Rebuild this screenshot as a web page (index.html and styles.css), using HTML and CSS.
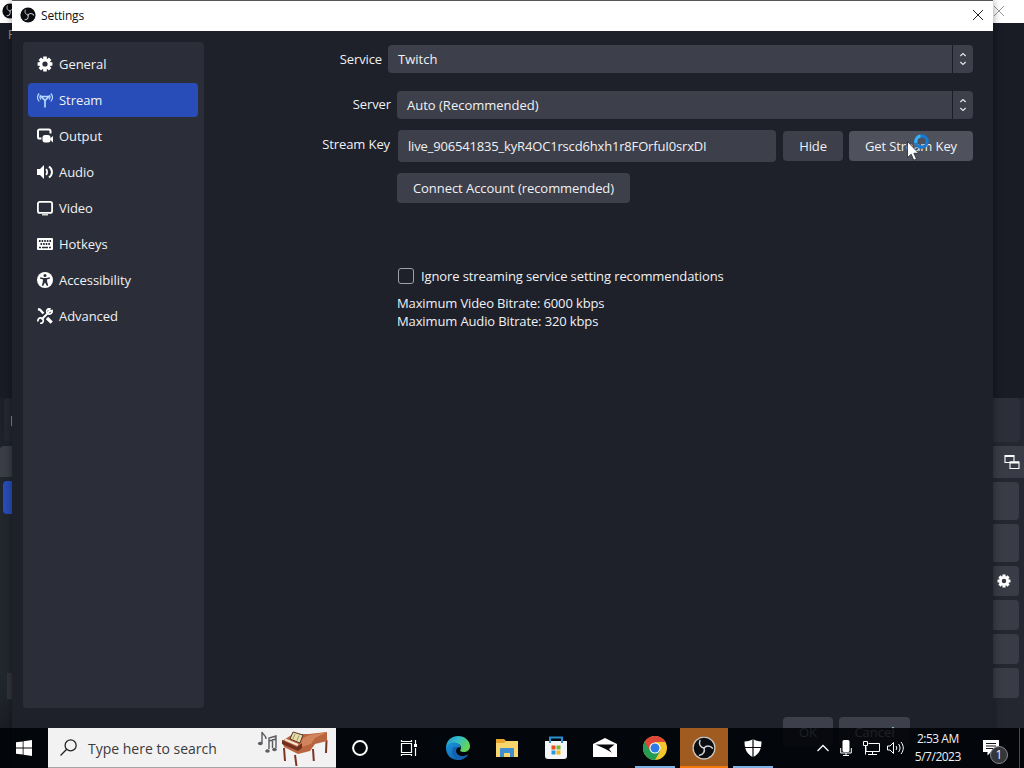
FILE: index.html
```
<!DOCTYPE html>
<html lang="en">
<head>
    <meta charset="UTF-8">
    <meta name="viewport" content="width=device-width, initial-scale=1.0">
    <title>Settings</title>
    <link rel="stylesheet" href="styles.css">
</head>
<body>
    <!-- shared icons -->
    <svg class="sprite" aria-hidden="true">
        <symbol id="obs" viewBox="0 0 16 16">
            <circle cx="8" cy="8" r="7.6" fill="#0b0c0f"/>
            <g fill="none" stroke="#d0d0d4" stroke-width="1" stroke-linecap="round">
                <path id="blade" d="M8 8C5.600 7.600 4.300 5.400 5.300 3"/>
                <use href="#blade" transform="rotate(120 8 8)"/>
                <use href="#blade" transform="rotate(240 8 8)"/>
            </g>
        </symbol>
        <symbol id="gear" viewBox="0 0 16 16">
            <circle cx="8" cy="8" r="4.2" fill="none" stroke="#fff" stroke-width="3.2"/>
            <g stroke="#fff" stroke-width="3.6">
                <path d="M8 .6v2.6M8 12.8v2.6M.6 8h2.6M12.8 8h2.6M2.8 2.8l1.8 1.8M11.4 11.4l1.8 1.8M13.2 2.8l-1.8 1.8M4.6 11.4l-1.8 1.8"/>
            </g>
        </symbol>
    </svg>

    <div class="desktop">
        <!-- main OBS window behind the dialog -->
        <div class="main-window">
            <div class="main-title">
                <svg class="main-logo"><use href="#obs"/></svg>
                <svg class="main-close" viewBox="0 0 10 10"><path d="M0 0l10 10M10 0L0 10"/></svg>
            </div>
            <div class="main-menu">F</div>
            <div class="main-body">
                <div class="edge-left">
                    <div class="stub stub-line"><span></span></div>
                    <div class="stub stub-tab"></div>
                    <div class="stub stub-active"></div>
                    <div class="stub stub-bottom"></div>
                </div>
                <div class="edge-right">
                    <div class="panel-top"></div>
                    <div class="panel-head">
                        <svg viewBox="0 0 16 16" width="16" height="16"><path d="M1 1.500h9v7H1zM6 8h9v6.500H6z" fill="#393b46" stroke="#fff" stroke-width="1.100"/><path d="M1 2h9M6 8.500h9" stroke="#fff" stroke-width="2"/></svg>
                    </div>
                    <div class="ctl ctl-a"></div>
                    <div class="ctl ctl-b"></div>
                    <div class="ctl ctl-gear"><svg width="14" height="14"><use href="#gear"/></svg></div>
                    <div class="ctl ctl-c"></div>
                    <div class="ctl ctl-d"></div>
                    <div class="ctl ctl-e"></div>
                </div>
            </div>
        </div>

        <div class="settings">
            <div class="titlebar">
                <svg class="logo"><use href="#obs"/></svg>
                <span class="title">Settings</span>
                <svg class="close" viewBox="0 0 10 10"><path d="M0 0l10 10M10 0L0 10"/></svg>
            </div>
            <div class="content">
                <ul class="sidebar">
                    <li class="item">
                        <svg viewBox="0 0 16 16"><use href="#gear"/></svg>General
                    </li>
                    <li class="item active">
                        <svg viewBox="0 0 16 16" fill="none" stroke="#b4d8ff"><path d="M4.200 4.500h7.600L8 8.500zM8 8v7.500" stroke-width="1.700"/><path d="M2.200 1.500C0 4 0 6.800 2.200 9.300M4 3.200c-1.300 1.300-1.300 3 0 4.300M13.800 1.500c2.200 2.500 2.200 5.300 0 7.800M12 3.200c1.300 1.300 1.300 3 0 4.300" stroke-width="1.200"/></svg>Stream
                    </li>
                    <li class="item">
                        <svg viewBox="0 0 16 16"><path d="M4.500 10.500H2.600A1.600 1.600 0 0 1 1 8.900V3.100a1.600 1.600 0 0 1 1.600-1.600h9.300a1.600 1.600 0 0 1 1.600 1.600v2.400" fill="none" stroke="#fff" stroke-width="2"/><rect x="5.500" y="7" width="8" height="7.500" rx="2.500" fill="#fff"/><path d="M12.500 11L16 8v6.500z" fill="#fff"/></svg>Output
                    </li>
                    <li class="item">
                        <svg viewBox="0 0 16 16"><path d="M0 5h3l4-4v14l-4-4H0z" fill="#fff"/><path d="M9 5.200c1.400 1.500 1.400 4.100 0 5.600M12 2.500c4 3 4 8 0 11" fill="none" stroke="#fff" stroke-width="1.900"/></svg>Audio
                    </li>
                    <li class="item">
                        <svg viewBox="0 0 16 16"><rect x=".9" y="1.900" width="14.200" height="11" rx="2" fill="none" stroke="#fff" stroke-width="1.800"/><path d="M5 14.800h6" stroke="#fff" stroke-width="1.200"/></svg>Video
                    </li>
                    <li class="item">
                        <svg viewBox="0 0 16 16"><rect y="2" width="16" height="12" rx="1" fill="#fff"/><path d="M2 5h12M3.500 8h10" stroke="#2b2e38" stroke-width="1.800" stroke-dasharray="1.600 1"/><path d="M2 11.400h2M5 11.400h6M12 11.400h2" stroke="#2b2e38" stroke-width="1.500"/></svg>Hotkeys
                    </li>
                    <li class="item">
                        <svg viewBox="0 0 16 16"><circle cx="8" cy="8" r="8" fill="#fff"/><circle cx="8" cy="3.400" r="1.500" fill="#2b2e38"/><path d="M3.200 5.200l3.300.8h3l3.300-.8.300 1.200-3.100 1 .2 2.600 1 3.500-1.300.5L8 10.500 6.100 14l-1.300-.5 1-3.500.2-2.600-3.100-1z" fill="#2b2e38"/></svg>Accessibility
                    </li>
                    <li class="item">
                        <svg viewBox="0 0 16 16" fill="none" stroke="#fff"><path d="M4.500 11.500L12 4" stroke-width="2"/><path d="M15 2.600a2.700 2.700 0 1 1-2.100-1.900L12 3.300zM1 13.400a2.700 2.700 0 1 1 2.100 1.900" stroke-width="1.700"/><path d="M1 1l2 .7L6.500 5.500" stroke-width="2.400"/><path d="M10 10l4.700 4.700" stroke-width="3.200"/></svg>Advanced
                    </li>
                </ul>

                <div class="form">
                    <div class="row row-service">
                        <label class="label">Service</label>
                        <div class="select">
                            <span class="value">Twitch</span>
                            <span class="arrows"><svg viewBox="0 0 8 14"><path d="M1.300 4L4 1.500 6.700 4M1.300 10L4 12.500 6.700 10"/></svg></span>
                        </div>
                    </div>
                    <div class="row row-server">
                        <label class="label">Server</label>
                        <div class="select">
                            <span class="value">Auto (Recommended)</span>
                            <span class="arrows"><svg viewBox="0 0 8 14"><path d="M1.300 4L4 1.500 6.700 4M1.300 10L4 12.500 6.700 10"/></svg></span>
                        </div>
                    </div>
                    <div class="row row-key">
                        <label class="label">Stream Key</label>
                        <div class="key">live_906541835_kyR4OC1rscd6hxh1r8FOrfuI0srxDI</div>
                        <button class="btn hide">Hide</button>
                        <button class="btn get">Get Stream Key</button>
                    </div>
                    <button class="btn connect">Connect Account (recommended)</button>
                    <div class="check">
                        <span class="box"></span>
                        <span class="check-text">Ignore streaming service setting recommendations</span>
                    </div>
                    <div class="limits">
                        <div>Maximum Video Bitrate: 6000 kbps</div>
                        <div>Maximum Audio Bitrate: 320 kbps</div>
                    </div>
                </div>
            </div>
            <div class="footer">
                <button class="btn ok">OK</button>
                <button class="btn cancel">Cancel</button>
            </div>
        </div>

        <!-- busy cursor -->
        <svg class="cursor" viewBox="0 0 26 28">
            <circle cx="15.500" cy="8.500" r="5.700" fill="none" stroke="#1879d2" stroke-width="3.200"/>
            <path d="M10 10A5.700 5.700 0 0 1 14.500 2.900" fill="none" stroke="#35b3f5" stroke-width="3"/>
            <path d="M1.500 8.500v16l3.700-3.300 2.600 6 2.700-1.200-2.600-5.700h4.800z" fill="#fff" stroke="#22232b" stroke-width=".8"/>
        </svg>

        <div class="taskbar">
            <div class="start">
                <svg width="16" height="16" viewBox="0 0 16 16" fill="#fff"><path d="M0 2.300l6.700-.9v6.200H0zM7.500 1.200L16 0v7.600H7.500zM0 8.400h6.700v6.200L0 13.700zM7.500 8.400H16V16l-8.500-1.200z"/></svg>
            </div>
            <div class="search">
                <svg class="lens" viewBox="0 0 16 16"><circle cx="10" cy="6" r="5.200"/><path d="M6.300 9.700L.5 15.500"/></svg>
                <span class="search-text">Type here to search</span>
                <svg class="piano" viewBox="0 0 72 36">
                    <g fill="none" stroke="#5b5d61" stroke-width="1.400">
                        <path d="M5 13V2c1 3 4 3 4 7M12 19V8l7-2v12M15.500 18V9M12 11l7-2"/>
                    </g>
                    <g fill="#5b5d61"><ellipse cx="3.300" cy="13.500" rx="2.400" ry="1.800"/><ellipse cx="10.500" cy="21" rx="2.300" ry="1.700"/><ellipse cx="17.500" cy="19.500" rx="2.300" ry="1.700"/></g>
                    <path d="M27 18l1 13M38 25l1.500 11M56 19l.8 12M69.500 10l-.5 13" stroke="#7d3522" stroke-width="2" fill="none"/>
                    <path d="M25 11l11-7 16 0 18-2v9l-12 3-5 7-12 3-14-7z" fill="#b9653f"/>
                    <path d="M46 8l7-3 17-3-12 6-4 6-13 4z" fill="#d2855c"/>
                    <path d="M25 10l15 7 5-4v5l-4 3-16-7z" fill="#70301f"/>
                    <path d="M28 9.500l13 5.500" stroke="#f4e4d4" stroke-width="2.200"/>
                    <path d="M36 2l10 3-3 8-10-4z" fill="#e9dda7" stroke="#573524"/>
                    <path d="M38 4l-2 5M42 5.500l-2 5" stroke="#999773"/>
                </svg>
            </div>
            <div class="apps">
                <div class="app"><svg width="18" height="18" viewBox="0 0 18 18"><circle cx="9" cy="9" r="6.900" fill="none" stroke="#fff" stroke-width="2"/></svg></div>
                <div class="app"><svg width="18" height="18" viewBox="0 0 18 18" fill="none" stroke="#fff" stroke-width="1.200"><path d="M1.500 4.500h10v9h-10zM1.500 1v1.500h10V1M1.500 17v-1.500h10V17M15.500 1v4M15.500 9v8"/><path d="M14 6.500h3" stroke-width="3"/></svg></div>
                <div class="app">
                    <svg width="26" height="26" viewBox="0 0 26 26">
                        <defs>
                            <linearGradient id="edge-top" x1="0" y1="0" x2="1" y2=".5"><stop offset="0" stop-color="#1c91d2"/><stop offset=".5" stop-color="#35bfc4"/><stop offset="1" stop-color="#65d654"/></linearGradient>
                            <linearGradient id="edge-low" x1="0" y1="0" x2="1" y2="1"><stop offset="0" stop-color="#1797dd"/><stop offset="1" stop-color="#1253a0"/></linearGradient>
                        </defs>
                        <path d="M1 13C1 5 7 1 13 1c7 0 12 5 12 10 0 4-3 6-6.500 6-3 0-4-1-3-2.500 2-3-1-6-5-6C6 8.500 2 11 1 13z" fill="url(#edge-top)"/>
                        <path d="M1 13c1-4 5-6 9-5.500 4 .4 6 3 5.500 5.500-2-2-4.500 0-4.500 3 0 4 5 7 12.500 3.500C21 23 17 25 13 25 6 25 1 20 1 13z" fill="url(#edge-low)"/>
                        <path d="M8.500 12c-3 4-1 10.500 4.500 13 4 0 8-2 10.500-5.500C16 23 11 20 11 16c0-2.500 1-3.500 2-4z" fill="#1261b3"/>
                    </svg>
                </div>
                <div class="app"><svg width="22" height="20" viewBox="0 0 22 20"><path d="M0 1h8l2 2h12v16H0z" fill="#e7a52e"/><path d="M0 5h8l2-2h12v16H0z" fill="#f8d66d"/><path d="M4 19v-8q0-1 1-1h12q1 0 1 1v8h-4v-4H8v4z" fill="#3e8ed0"/></svg></div>
                <div class="app"><svg width="24" height="24" viewBox="0 0 24 24"><path d="M1 5h22v15q0 3-3 3H4q-3 0-3-3z" fill="#f3f5f7"/><path d="M7.500 9.500h4v4h-4z" fill="#e84e25"/><path d="M12.500 9.500h4v4h-4z" fill="#7db72f"/><path d="M7.500 14.500h4v4h-4z" fill="#269bd6"/><path d="M12.500 14.500h4v4h-4z" fill="#f5b51e"/><path d="M6 7V1.500h12V7" fill="none" stroke="#2b8fd4" stroke-width="2"/></svg></div>
                <div class="app"><svg width="24" height="20" viewBox="0 0 24 20"><path d="M0 6l12-6 12 6v13H0z" fill="#fff"/><path d="M2.500 6.500h19L16 11l3 3.700L12.500 11z" fill="#08090c"/></svg></div>
                <div class="app running"><svg width="24" height="24" viewBox="0 0 24 24"><circle cx="12" cy="12" r="12" fill="#f4c52d"/><path d="M12 12L1.600 6A12 12 0 0 0 12 24l5.200-9z" fill="#259c51"/><path d="M1.600 6A12 12 0 0 1 22.400 6H12l-5 9z" fill="#df4637"/><circle cx="12" cy="12" r="5.600" fill="#fff"/><circle cx="12" cy="12" r="4.500" fill="#2d7be5"/></svg></div>
                <div class="app current"><svg width="24" height="24" viewBox="0 0 16 16"><use href="#obs"/><circle cx="8" cy="8" r="7.300" fill="none" stroke="#d4c9bf" stroke-width=".9"/></svg></div>
                <div class="app running"><svg width="18" height="18" viewBox="0 0 18 18"><path d="M9 0c2 1.500 5 2.500 8.500 2.500C17.500 10 15 15.500 9 18 3 15.500.5 10 .5 2.500 4 2.500 7 1.500 9 0z" fill="#fff"/><path d="M9 0v18M0 8.500h18" stroke="#07090d" stroke-width="1.200"/></svg></div>
            </div>
            <div class="tray">
                <svg width="12" height="8" viewBox="0 0 12 8" fill="none" stroke="#fff" stroke-width="1.300"><path d="M.5 7L6 1.500 11.500 7"/></svg>
                <svg width="12" height="16" viewBox="0 0 12 16"><rect x="2.500" width="7" height="12" rx="1.500" fill="#fff"/><path d="M.7 8v5h10.600V8M6 13v3M3 15.500h6" fill="none" stroke="#fff"/></svg>
                <svg width="17" height="15" viewBox="0 0 17 15" fill="none" stroke="#fff"><path d="M5.500 2.500h11v8H3v-5M9.500 10.500v3M5 13.500h9M.5.500h4v4h-4zM2.500 4.500v9"/></svg>
                <svg class="volume" width="17" height="14" viewBox="0 0 17 14" fill="none" stroke="#fff"><path d="M.5 5H3l3.500-3.500v11L3 9H.5zM9 5c1 1.300 1 2.700 0 4M11.500 3c2 2.500 2 5.500 0 8M14 1c3 4 3 8 0 12"/></svg>
            </div>
            <div class="clock">
                <div>2:53 AM</div>
                <div>5/7/2023</div>
            </div>
            <div class="notify">
                <svg width="16" height="16" viewBox="0 0 16 16"><path d="M0 0h16v12H8l-3.500 3.500V12H0z" fill="#fff"/><path d="M3 3.500h10M3 6h10M3 8.500h7" stroke="#15161a"/></svg>
                <span class="badge">1</span>
            </div>
        </div>
    </div>
</body>
</html>
```
FILE: styles.css
```
:root {
    --bg: #1e202a;
    --panel: #2b2e38;
    --field: #3d3f4a;
    --accent: #284cb8;
    --text: #f0f1f4;
}

* {
    box-sizing: border-box;
}

body {
    margin: 0;
    background: #000;
    font-family: "Open Sans", "Noto Sans", sans-serif;
    font-size: 13px;
    color: var(--text);
}

svg {
    display: block;
    flex-shrink: 0;
}

.sprite {
    position: absolute;
    width: 0;
    height: 0;
}

.desktop {
    position: relative;
    width: 1024px;
    height: 768px;
    overflow: hidden;
}

/* window behind */
.main-window {
    position: absolute;
    inset: 0;
    background: #191b25;
}

.main-title {
    display: flex;
    justify-content: space-between;
    align-items: center;
    height: 23px;
    padding: 0 20px 2px 2px;
    background: #fff;
}

.main-logo {
    width: 16px;
    height: 16px;
}

.main-close {
    width: 10px;
    height: 10px;
    stroke: #999;
    fill: none;
}

.main-menu {
    height: 24px;
    padding: 3px 0 0 8px;
    font-size: 12px;
    color: #9a9ba1;
}

.main-body {
    display: flex;
    justify-content: space-between;
    padding-top: 351px;
}

.edge-left {
    width: 12px;
    height: 330px;
    background: linear-gradient(#1c1e28, #22272e 30%, #22272e 85%, #1b1d26);
}

.stub {
    margin-left: auto;
}

.stub-line {
    display: flex;
    justify-content: flex-end;
    width: 8px;
    height: 44px;
    padding-top: 18px;
    border-radius: 4px 0 0 4px;
    background: #242630;
}

.stub-line span {
    width: 1px;
    height: 10px;
    background: #85868c;
}

.stub-tab {
    width: 12px;
    height: 31px;
    margin-top: 4px;
    border-radius: 4px 0 0 0;
    background: #3a3c46;
}

.stub-active {
    width: 9px;
    height: 33px;
    margin-top: 4px;
    border-radius: 4px 0 0 4px;
    background: var(--accent);
}

.stub-bottom {
    width: 5px;
    height: 26px;
    margin-top: 159px;
    background: #30323d;
}

.edge-right {
    display: flex;
    flex-direction: column;
    width: 31px;
    padding-bottom: 4px;
    background: #242630;
}

.panel-top {
    width: 27px;
    height: 44px;
    border-radius: 0 4px 4px 0;
    background: #2c2e39;
}

.panel-head {
    height: 32px;
    margin-top: 4px;
    padding: 8px 0 0 11px;
    background: #393b46;
}

.ctl {
    width: 26px;
    border-radius: 0 4px 4px 0;
    background: #393b46;
}

.ctl-a {
    height: 38px;
    margin-top: 4px;
}

.ctl-b {
    height: 38px;
    margin-top: 4px;
}

.ctl-gear {
    height: 30px;
    margin-top: 4px;
    padding: 8px 0 0 4px;
}

.ctl-c,
.ctl-d,
.ctl-e {
    height: 30px;
    margin-top: 4px;
}

/* settings dialog */
.settings {
    position: absolute;
    left: 12px;
    top: 0;
    width: 981px;
    height: 768px;
    border-top: 1px solid #555;
    background: var(--bg);
    box-shadow: 0 0 8px rgba(0, 0, 0, 0.4);
}

.titlebar {
    display: flex;
    align-items: center;
    height: 30px;
    padding: 0 10px 2px 8px;
    background: #fff;
    color: #111;
}

.logo {
    width: 16px;
    height: 16px;
}

.title {
    flex: 1;
    margin-left: 5px;
    font-size: 12px;
    letter-spacing: -0.2px;
}

.close {
    width: 10px;
    height: 10px;
    fill: none;
    stroke: #222;
}

.content {
    display: flex;
    height: 677px;
    padding: 11px 20px 0 11px;
}

.sidebar {
    width: 181px;
    margin: 0;
    padding: 5px;
    border-radius: 4px;
    background: var(--panel);
    list-style: none;
}

.item {
    display: flex;
    align-items: center;
    gap: 6px;
    width: 170px;
    height: 34px;
    margin-bottom: 2px;
    padding-left: 9px;
    border-radius: 4px;
    letter-spacing: -0.05px;
}

.item svg {
    width: 16px;
    height: 16px;
}

.item.active {
    background: var(--accent);
}

.form {
    flex: 1;
    padding-top: 3px;
    letter-spacing: -0.11px;
}

.row {
    display: flex;
}

.label {
    flex-shrink: 0;
    width: 187px;
    margin-right: 6px;
    line-height: 28px;
    text-align: right;
}

.row-service .label {
    width: 178px;
}

.row-server .label {
    padding-bottom: 1px;
    line-height: 27px;
}

.row-server {
    margin-top: 18px;
}

.select {
    display: flex;
    flex: 1;
    height: 28px;
    border-radius: 4px;
    background: var(--field);
}

.value {
    flex: 1;
    padding-left: 10px;
    line-height: 28px;
    letter-spacing: 0;
}

.arrows {
    display: flex;
    align-items: center;
    justify-content: center;
    width: 21px;
    border-left: 1px solid #1b1c25;
}

.arrows svg {
    width: 8px;
    height: 14px;
    fill: none;
    stroke: #e4e5e9;
    stroke-width: 1.2;
}

.row-key {
    align-items: center;
    margin-top: 11px;
}

.row-key .label {
    width: 186px;
    margin-right: 8px;
    padding-bottom: 4px;
}

.key {
    width: 378px;
    height: 32px;
    padding-left: 10px;
    border-radius: 4px;
    background: var(--field);
    line-height: 32px;
    letter-spacing: -0.17px;
}

.btn {
    height: 30px;
    padding: 0;
    border: none;
    border-radius: 4px;
    background: var(--field);
    color: inherit;
    font: inherit;
    letter-spacing: inherit;
}

.hide {
    width: 60px;
    margin-left: 7px;
}

.get {
    width: 124px;
    margin-left: 6px;
    background: #4f515c;
}

.connect {
    display: block;
    width: 233px;
    margin: 11px 0 0 193px;
    letter-spacing: -0.06px;
}

.check {
    display: flex;
    align-items: center;
    height: 18px;
    margin: 64px 0 0 194px;
}

.box {
    width: 16px;
    height: 16px;
    margin-right: 7px;
    border: 1px solid #a0a1a8;
    border-radius: 3px;
}

.limits {
    margin: 9px 0 0 193px;
    line-height: 18px;
    letter-spacing: -0.13px;
}

.footer {
    display: flex;
    gap: 6px;
    padding: 9px 0 0 771px;
}

.ok {
    width: 50px;
}

.cancel {
    width: 71px;
}

.cursor {
    position: absolute;
    left: 906px;
    top: 133px;
    width: 26px;
    height: 28px;
}

/* taskbar */
.taskbar {
    position: absolute;
    left: 0;
    bottom: 0;
    display: flex;
    width: 1024px;
    height: 40px;
    background: rgba(0, 2, 6, 0.88);
}

.start {
    display: flex;
    align-items: center;
    justify-content: center;
    width: 48px;
}

.search {
    display: flex;
    align-items: center;
    width: 288px;
    padding-left: 12px;
    border-bottom: 1px solid #a5a5a8;
    background: #f2f2f2;
    color: #3b3b3d;
}

.lens {
    width: 17px;
    height: 17px;
    fill: none;
    stroke: #222;
    stroke-width: 1.2;
}

.search-text {
    flex: 1;
    margin-left: 11px;
    padding-top: 2px;
    font-size: 14px;
    white-space: nowrap;
}

.piano {
    width: 72px;
    height: 36px;
    margin-right: 7px;
}

.apps {
    display: flex;
}

.app {
    display: flex;
    align-items: center;
    justify-content: center;
    width: 48px;
    margin-right: 1.1px;
}

.running {
    background: linear-gradient(#7db1e2, #7db1e2) center bottom / 40px 2px no-repeat;
}

.current {
    background: #a05b20;
    box-shadow: inset 0 -2px #f57a0c;
}

.tray {
    display: flex;
    align-items: center;
    gap: 11px;
    margin-left: 39px;
}

.volume {
    margin-left: -4px;
}

.clock {
    width: 52px;
    margin-left: 8px;
    padding-top: 2px;
    font-size: 12px;
    line-height: 18px;
    letter-spacing: -0.5px;
    text-align: center;
    white-space: nowrap;
}

.notify {
    position: relative;
    width: 56px;
    padding: 12px 0 0 19px;
    border-right: 1px solid #454a52;
}

.badge {
    position: absolute;
    left: 26px;
    top: 18px;
    width: 18px;
    height: 18px;
    border: 1px solid #85878b;
    border-radius: 50%;
    background: #34363b;
    font-size: 12px;
    line-height: 16px;
    text-align: center;
}
```
